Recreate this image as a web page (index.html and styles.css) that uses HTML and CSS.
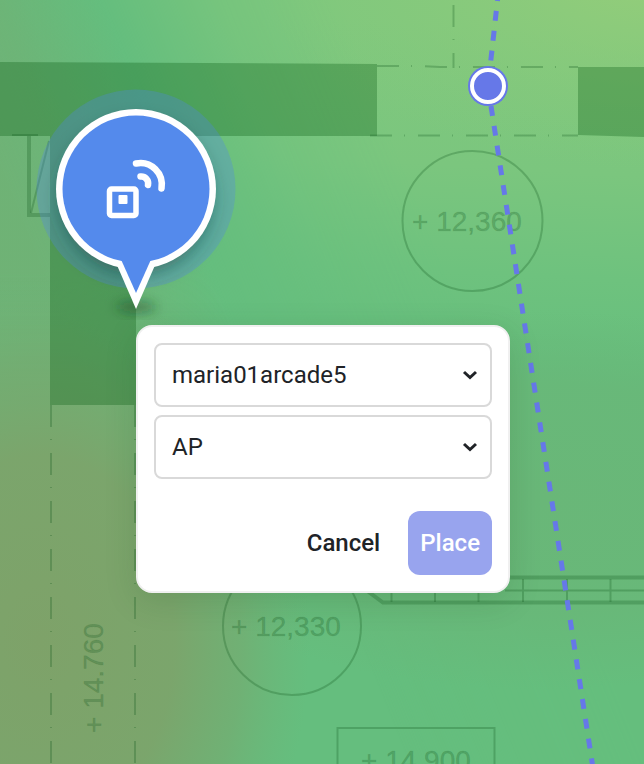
FILE: index.html
```html
<!DOCTYPE html>
<html lang="en">
<head>
<meta charset="utf-8">
<meta name="viewport" content="width=device-width, initial-scale=1">
<title>Place access point</title>
<link rel="stylesheet" href="styles.css">
</head>
<body>
<main class="map">
  <svg class="plan" viewBox="0 0 644 764" preserveAspectRatio="xMinYMin slice" aria-label="Floor plan">
    <defs>
      <linearGradient id="signal" gradientUnits="userSpaceOnUse" x1="20" y1="0" x2="0" y2="350">
        <stop offset="0" stop-color="#80c87d"/>
        <stop offset=".4" stop-color="#7bc67e"/>
        <stop offset=".7" stop-color="#6ec27e"/>
        <stop offset="1" stop-color="#65be7d"/>
      </linearGradient>
      <linearGradient id="reach" gradientUnits="userSpaceOnUse" x1="102" y1="0" x2="306" y2="-82">
        <stop offset="0" stop-color="#fff" stop-opacity="0"/>
        <stop offset=".5" stop-color="#fff" stop-opacity=".65"/>
        <stop offset="1" stop-color="#fff"/>
      </linearGradient>
      <mask id="covered" maskUnits="userSpaceOnUse" x="0" y="0" width="644" height="764">
        <rect width="644" height="764" fill="url(#reach)"/>
      </mask>
      <radialGradient id="strong" gradientUnits="userSpaceOnUse" cx="0" cy="0" r="1" gradientTransform="translate(670 -40) scale(420 210)">
        <stop offset="0" stop-color="#98ce79"/>
        <stop offset="1" stop-color="#88ca7c" stop-opacity="0"/>
      </radialGradient>
      <linearGradient id="edge" gradientUnits="userSpaceOnUse" x1="102" y1="0" x2="-42" y2="58">
        <stop offset="0" stop-color="#70b175" stop-opacity="0"/>
        <stop offset=".6" stop-color="#70b175" stop-opacity=".7"/>
        <stop offset="1" stop-color="#70b175" stop-opacity=".9"/>
      </linearGradient>
      <linearGradient id="fade" gradientUnits="userSpaceOnUse" x1="0" y1="0" x2="0" y2="600">
        <stop offset=".45" stop-color="#fff"/>
        <stop offset="1" stop-color="#fff" stop-opacity="0"/>
      </linearGradient>
      <mask id="upper" maskUnits="userSpaceOnUse" x="0" y="0" width="644" height="764">
        <rect width="644" height="764" fill="url(#fade)"/>
      </mask>
      <radialGradient id="weak" gradientUnits="userSpaceOnUse" cx="0" cy="0" r="1" gradientTransform="translate(40 640) scale(270 370)">
        <stop offset="0" stop-color="#7ea269"/>
        <stop offset=".5" stop-color="#7ca46b" stop-opacity=".95"/>
        <stop offset=".75" stop-color="#77a86e" stop-opacity=".6"/>
        <stop offset="1" stop-color="#70b175" stop-opacity="0"/>
      </radialGradient>
      <radialGradient id="mid" gradientUnits="userSpaceOnUse" cx="0" cy="0" r="1" gradientTransform="translate(540 500) scale(420 190)">
        <stop offset="0" stop-color="#69b778"/>
        <stop offset=".6" stop-color="#69b778" stop-opacity=".8"/>
        <stop offset="1" stop-color="#69b778" stop-opacity="0"/>
      </radialGradient>
    </defs>
    <rect width="644" height="764" fill="#65be7e"/>
    <rect width="644" height="764" fill="url(#signal)" mask="url(#covered)"/>
    <rect width="644" height="764" fill="url(#strong)"/>
    <rect width="644" height="764" fill="url(#mid)"/>
    <rect width="644" height="764" fill="url(#edge)" mask="url(#upper)"/>
    <rect width="644" height="764" fill="url(#weak)"/>

    <g class="walls">
      <path d="M0 62 377 64V136H0ZM578 67H644V137L578 135ZM50 136H136V405H50Z"/>
    </g>
    <g class="lines">
      <path class="thick" d="M29 136V215H50"/>
      <path d="M31 213 49 141M12 135H38"/>
      <path class="dash" d="M377 66H420L440 67H578M370 135.500H578"/>
      <path class="dash" d="M453.500 5V68"/>
      <path class="dash" d="M51 405V764M135 405V764"/>
      <circle cx="472.500" cy="221" r="70"/>
      <circle cx="292" cy="626" r="69"/>
      <path d="M337.500 770V728H494.500V770"/>
      <path class="thick" d="M505 577.500H644M366 590 383 602.500H644"/>
      <path d="M391.500 590V602M435 590V602M478.500 590V602M523 579V602M567 579V602M610.500 579V602M505 590.500H644"/>
    </g>
    <g class="levels">
      <text x="412" y="231">+ 12,360</text>
      <text x="231" y="636">+ 12,330</text>
      <text x="361" y="770">+ 14.900</text>
      <text transform="translate(103 733) rotate(-90)">+ 14.760</text>
    </g>

    <path class="route" d="M498.500 -9 488 86"/>
    <path class="route" d="M491 106 593 768"/>
    <circle cx="488" cy="86" r="20" fill="#6678e8"/>
    <circle cx="488" cy="86" r="16" fill="#6678e8" stroke="#fff" stroke-width="4"/>
  </svg>

  <svg class="pin" viewBox="0 0 220 240" role="img" aria-label="Access point">
    <defs>
      <filter id="soft" x="-30%" y="-30%" width="160%" height="160%"><feGaussianBlur stdDeviation="9"/></filter>
      <filter id="spot" x="-50%" y="-100%" width="200%" height="300%"><feGaussianBlur stdDeviation="6"/></filter>
    </defs>
    <circle cx="108" cy="109" r="99.500" fill="#4f86ec" fill-opacity=".3"/>
    <circle cx="108" cy="118" r="76" fill="#193c35" fill-opacity=".5" filter="url(#soft)"/>
    <ellipse cx="108" cy="227" rx="20" ry="6" fill="#173c23" fill-opacity=".45" filter="url(#spot)"/>
    <g fill="#fff">
      <circle cx="108" cy="109" r="80"/>
      <path d="M85 176H131L108 229Z"/>
    </g>
    <g fill="#548aec">
      <circle cx="108" cy="109" r="73.500"/>
      <path d="M91 175H125L108 213Z"/>
    </g>
    <g fill="none" stroke="#fff" stroke-width="5.500">
      <rect x="81.500" y="109" width="26.500" height="26.500" rx="2"/>
      <g stroke-width="6.500" stroke-linecap="round">
        <path d="M108 83.500C123 80.500 136 93 133.500 108.500"/>
        <path d="M112.500 96.500C117 96 121 100 120 105"/>
      </g>
    </g>
    <rect x="90.500" y="115" width="9" height="9" rx="1" fill="#fff"/>
  </svg>

  <form class="popup">
    <div class="fields">
      <div class="field">
        <select aria-label="Device name"><option>maria01arcade5</option></select>
        <svg class="chevron" viewBox="0 0 16 10" aria-hidden="true"><path d="M2 2 8 7.500 14 2"/></svg>
      </div>
      <div class="field">
        <select aria-label="Device type"><option>AP</option></select>
        <svg class="chevron" viewBox="0 0 16 10" aria-hidden="true"><path d="M2 2 8 7.500 14 2"/></svg>
      </div>
    </div>
    <div class="actions">
      <button type="button" class="button">Cancel</button>
      <button type="button" class="button primary">Place</button>
    </div>
  </form>
</main>
</body>
</html>
```

FILE: styles.css
```css
* {
  box-sizing: border-box;
}

body {
  margin: 0;
  font-family: Roboto, sans-serif;
  color: #202327;
}

.map {
  position: relative;
  height: 100vh;
  overflow: hidden;
  background: #66bd7e;
}

.plan {
  display: block;
  width: 100%;
  height: 100%;
}

.walls {
  fill: #0f6018;
  fill-opacity: 0.33;
}

.lines {
  fill: none;
  stroke: #145a1e;
  stroke-opacity: 0.27;
  stroke-width: 2;
}

.thick {
  stroke-width: 4;
}

.dash {
  stroke-dasharray: 22 12 1 13;
}

.levels {
  font-family: "Liberation Sans", Arial, sans-serif;
  font-size: 28px;
  fill: #145a1e;
  fill-opacity: 0.27;
  stroke: #145a1e;
  stroke-opacity: 0.1;
}

.route {
  fill: none;
  stroke: #6678e8;
  stroke-width: 5;
  stroke-dasharray: 10 10;
}

.pin {
  position: absolute;
  left: 28px;
  top: 80px;
  width: 220px;
  height: 240px;
}

.popup {
  position: absolute;
  left: 136px;
  top: 325px;
  width: 374px;
  display: flex;
  flex-direction: column;
  gap: 32px;
  padding: 16px;
  border: 2px solid #f0f0f0;
  border-radius: 16px;
  background: #fff;
  box-shadow: 0 8px 32px rgba(30, 70, 30, 0.15);
}

.fields {
  display: flex;
  flex-direction: column;
  gap: 8px;
}

.field {
  display: grid;
  align-items: center;
}

.field > * {
  grid-area: 1 / 1;
}

select {
  appearance: none;
  width: 100%;
  height: 64px;
  padding: 0 48px 0 16px;
  border: 2px solid #d9d9d9;
  border-radius: 8px;
  background: #fff;
  color: inherit;
  font: 400 24px/32px Roboto, sans-serif;
}

.chevron {
  justify-self: end;
  width: 16px;
  height: 10px;
  margin-right: 14px;
  fill: none;
  stroke: #202327;
  stroke-width: 3;
  pointer-events: none;
}

.actions {
  display: flex;
  justify-content: flex-end;
  gap: 16px;
}

.button {
  height: 64px;
  padding: 0 12px;
  border: 0;
  border-radius: 12px;
  background: transparent;
  color: inherit;
  font: 500 24px/32px Roboto, sans-serif;
}

.primary {
  background: #98a4ee;
  color: #fff;
}
```
